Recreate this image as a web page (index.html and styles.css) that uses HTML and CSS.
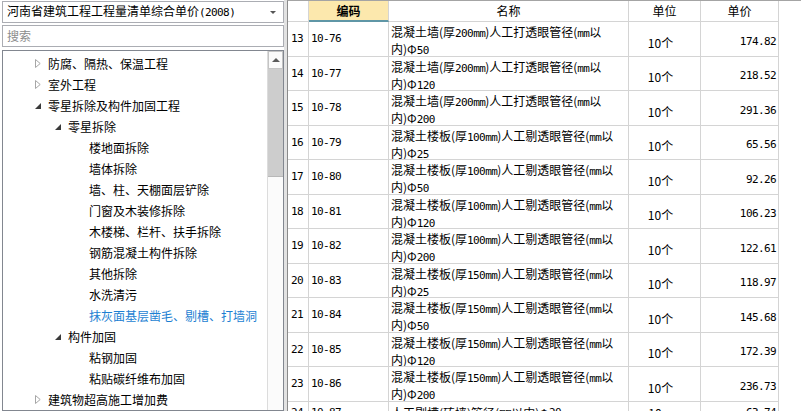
FILE: index.html
```html
<!DOCTYPE html>
<html lang="zh-CN">
<head>
<meta charset="utf-8">
<title>清单综合单价</title>
<link rel="stylesheet" href="styles.css">
</head>
<body>
<div class="app">
  <aside class="left">
    <div class="select">
      <span class="select-text">河南省建筑工程工程量清单综合单价<span class="ln">(2008)</span></span>
      <span class="select-arrow"></span>
    </div>
    <div class="search">搜索</div>
    <div class="tree-box">
      <ul class="tree">
        <li class="node l1"><span class="tog"><svg width="6" height="9" viewBox="0 0 6 9"><path d="M0.5 0.5 L5.2 4.5 L0.5 8.5 Z" fill="#fff" stroke="#a6a6a6"/></svg></span>防腐、隔热、保温工程</li>
        <li class="node l1"><span class="tog"><svg width="6" height="9" viewBox="0 0 6 9"><path d="M0.5 0.5 L5.2 4.5 L0.5 8.5 Z" fill="#fff" stroke="#a6a6a6"/></svg></span>室外工程</li>
        <li class="node l1"><span class="tog"><svg width="6" height="6" viewBox="0 0 6 6"><path d="M6 0 L6 6 L0 6 Z" fill="#3a3a3a"/></svg></span>零星拆除及构件加固工程</li>
        <li class="node l2"><span class="tog"><svg width="6" height="6" viewBox="0 0 6 6"><path d="M6 0 L6 6 L0 6 Z" fill="#3a3a3a"/></svg></span>零星拆除</li>
        <li class="node l3">楼地面拆除</li>
        <li class="node l3">墙体拆除</li>
        <li class="node l3">墙、柱、天棚面层铲除</li>
        <li class="node l3">门窗及木装修拆除</li>
        <li class="node l3">木楼梯、栏杆、扶手拆除</li>
        <li class="node l3">钢筋混凝土构件拆除</li>
        <li class="node l3">其他拆除</li>
        <li class="node l3">水洗清污</li>
        <li class="node l3 selected">抹灰面基层凿毛、剔槽、打墙洞</li>
        <li class="node l2"><span class="tog"><svg width="6" height="6" viewBox="0 0 6 6"><path d="M6 0 L6 6 L0 6 Z" fill="#3a3a3a"/></svg></span>构件加固</li>
        <li class="node l3">粘钢加固</li>
        <li class="node l3">粘贴碳纤维布加固</li>
        <li class="node l1"><span class="tog"><svg width="6" height="9" viewBox="0 0 6 9"><path d="M0.5 0.5 L5.2 4.5 L0.5 8.5 Z" fill="#fff" stroke="#a6a6a6"/></svg></span>建筑物超高施工增加费</li>
      </ul>
      <div class="vscroll">
        <div class="sb-up"><span class="sb-arrow"></span></div>
        <div class="sb-thumb"></div>
        <div class="sb-track"></div>
      </div>
    </div>
  </aside>
  <div class="splitter"></div>
  <main class="right">
    <div class="grid">
      <div class="hc"></div>
      <div class="hc active">编码</div>
      <div class="hc">名称</div>
      <div class="hc">单位</div>
      <div class="hc">单价</div>

      <div class="c num">13</div><div class="c code">10-76</div><div class="c name">混凝土墙(厚<span class="ln">200mm</span>)人工打透眼管径(<span class="ln">mm</span>以<br>内)Φ<span class="ln">50</span></div><div class="c unit">10个</div><div class="c price">174.82</div>
      <div class="c num">14</div><div class="c code">10-77</div><div class="c name">混凝土墙(厚<span class="ln">200mm</span>)人工打透眼管径(<span class="ln">mm</span>以<br>内)Φ<span class="ln">120</span></div><div class="c unit">10个</div><div class="c price">218.52</div>
      <div class="c num">15</div><div class="c code">10-78</div><div class="c name">混凝土墙(厚<span class="ln">200mm</span>)人工打透眼管径(<span class="ln">mm</span>以<br>内)Φ<span class="ln">200</span></div><div class="c unit">10个</div><div class="c price">291.36</div>
      <div class="c num">16</div><div class="c code">10-79</div><div class="c name">混凝土楼板(厚<span class="ln">100mm</span>)人工剔透眼管径(<span class="ln">mm</span>以<br>内)Φ<span class="ln">25</span></div><div class="c unit">10个</div><div class="c price">65.56</div>
      <div class="c num">17</div><div class="c code">10-80</div><div class="c name">混凝土楼板(厚<span class="ln">100mm</span>)人工剔透眼管径(<span class="ln">mm</span>以<br>内)Φ<span class="ln">50</span></div><div class="c unit">10个</div><div class="c price">92.26</div>
      <div class="c num">18</div><div class="c code">10-81</div><div class="c name">混凝土楼板(厚<span class="ln">100mm</span>)人工剔透眼管径(<span class="ln">mm</span>以<br>内)Φ<span class="ln">120</span></div><div class="c unit">10个</div><div class="c price">106.23</div>
      <div class="c num">19</div><div class="c code">10-82</div><div class="c name">混凝土楼板(厚<span class="ln">100mm</span>)人工剔透眼管径(<span class="ln">mm</span>以<br>内)Φ<span class="ln">200</span></div><div class="c unit">10个</div><div class="c price">122.61</div>
      <div class="c num">20</div><div class="c code">10-83</div><div class="c name">混凝土楼板(厚<span class="ln">150mm</span>)人工剔透眼管径(<span class="ln">mm</span>以<br>内)Φ<span class="ln">25</span></div><div class="c unit">10个</div><div class="c price">118.97</div>
      <div class="c num">21</div><div class="c code">10-84</div><div class="c name">混凝土楼板(厚<span class="ln">150mm</span>)人工剔透眼管径(<span class="ln">mm</span>以<br>内)Φ<span class="ln">50</span></div><div class="c unit">10个</div><div class="c price">145.68</div>
      <div class="c num">22</div><div class="c code">10-85</div><div class="c name">混凝土楼板(厚<span class="ln">150mm</span>)人工剔透眼管径(<span class="ln">mm</span>以<br>内)Φ<span class="ln">120</span></div><div class="c unit">10个</div><div class="c price">172.39</div>
      <div class="c num">23</div><div class="c code">10-86</div><div class="c name">混凝土楼板(厚<span class="ln">150mm</span>)人工剔透眼管径(<span class="ln">mm</span>以<br>内)Φ<span class="ln">200</span></div><div class="c unit">10个</div><div class="c price">236.73</div>
      <div class="c num short">24</div><div class="c code short">10-87</div><div class="c name short">人工剔槽(砖墙)管径(<span class="ln">mm</span>以内)Φ<span class="ln">20</span></div><div class="c unit short">10m</div><div class="c price short">63.74</div>
    </div>
  </main>
</div>
</body>
</html>
```

FILE: styles.css
```css
html, body {
  margin: 0;
  padding: 0;
  background: #ffffff;
}

body {
  width: 801px;
  height: 411px;
  overflow: hidden;
  font-family: "Noto Sans CJK SC", "Noto Sans", sans-serif;
  font-size: 12px;
  color: #000;
}

.ln {
  font-family: "DejaVu Sans Mono", monospace;
  font-size: 11px;
  letter-spacing: -0.6px;
}

.app {
  display: flex;
  height: 411px;
}

/* ---------- left panel ---------- */
.left {
  width: 284px;
  flex-shrink: 0;
  box-sizing: border-box;
  padding: 1px 0 0 2px;
  display: flex;
  flex-direction: column;
}

.select {
  height: 22px;
  box-sizing: border-box;
  border: 1px solid #abadb3;
  display: flex;
  align-items: center;
  padding: 0 4px;
  margin-bottom: 2px;
}

.select-text {
  flex: 1;
  white-space: nowrap;
  line-height: 20px;
}

.select-arrow {
  width: 0;
  height: 0;
  border-left: 3px solid transparent;
  border-right: 3px solid transparent;
  border-top: 3px solid #555;
  margin-right: 3px;
}

.search {
  height: 22px;
  box-sizing: border-box;
  border: 1px solid #abadb3;
  padding: 0 4px;
  line-height: 20px;
  color: #8c8c8c;
  margin-bottom: 3px;
}

.tree-box {
  flex: 1;
  min-height: 0;
  border: 1px solid #828790;
  display: flex;
  overflow: hidden;
}

.tree {
  flex: 1;
  list-style: none;
  margin: 0;
  padding: 2px 0 0 0;
}

.node {
  height: 21px;
  display: flex;
  align-items: center;
  white-space: nowrap;
}

.node.l1 { padding-left: 32px; }
.node.l2 { padding-left: 52px; }
.node.l3 { padding-left: 86px; }

.node.selected { color: #1c7fd2; }

.tog {
  width: 13px;
  flex-shrink: 0;
  display: flex;
  align-items: center;
}

.vscroll {
  width: 15px;
  flex-shrink: 0;
  border-left: 1px solid #dcdcdc;
  display: flex;
  flex-direction: column;
  background: #fbfbfb;
}

.sb-up {
  height: 18px;
  box-sizing: border-box;
  border: 1px solid #c4c4c4;
  background: #fafafa;
  display: flex;
  align-items: center;
  justify-content: center;
}

.sb-arrow {
  width: 0;
  height: 0;
  border-left: 4px solid transparent;
  border-right: 4px solid transparent;
  border-bottom: 4px solid #5a5a5a;
}

.sb-thumb {
  height: 107px;
  background: #cdcdcd;
  border-bottom: 1px solid #b8b8b8;
}

.sb-track {
  flex: 1;
}

/* ---------- splitter ---------- */
.splitter {
  width: 3px;
  flex-shrink: 0;
  background: #e2e2e2;
}

/* ---------- right table ---------- */
.right {
  flex: 1;
  border-left: 1px solid #8a8a8a;
  border-top: 1px solid #a4a4a4;
  overflow: hidden;
}

.grid {
  display: grid;
  grid-template-columns: 21px 80px 240px 72px 78px;
  grid-template-rows: 21px repeat(11, 34.5px) 22px;
  width: 491px;
}

.hc {
  box-sizing: border-box;
  border-right: 1px solid #d4d4d4;
  border-bottom: 1px solid #d4d4d4;
  text-align: center;
  line-height: 20px;
  white-space: nowrap;
}

.hc.active {
  background: #fce8ad;
  font-weight: bold;
  border-bottom: 2px solid #5f96a6;
  line-height: 19px;
}

.c {
  box-sizing: border-box;
  border-right: 1px solid #d4d4d4;
  border-bottom: 1px solid #d4d4d4;
  display: flex;
  align-items: center;
  white-space: nowrap;
  overflow: hidden;
}

.num {
  padding-left: 3px;
  font-family: "DejaVu Sans Mono", monospace;
  font-size: 11px;
  letter-spacing: -0.6px;
}

.code {
  padding-left: 2px;
  font-family: "DejaVu Sans Mono", monospace;
  font-size: 11px;
  letter-spacing: -0.6px;
}

.name {
  display: block;
  padding: 2px 0 0 2px;
  line-height: 15px;
}

.unit {
  justify-content: center;
  padding-top: 7px;
  padding-right: 8px;
}

.price {
  justify-content: flex-end;
  padding-right: 2px;
  padding-top: 5px;
  font-family: "DejaVu Sans Mono", monospace;
  font-size: 11px;
  letter-spacing: -0.6px;
}

.c.short {
  padding-top: 0;
  align-items: center;
}

.name.short {
  display: flex;
  padding-top: 0;
}
```
